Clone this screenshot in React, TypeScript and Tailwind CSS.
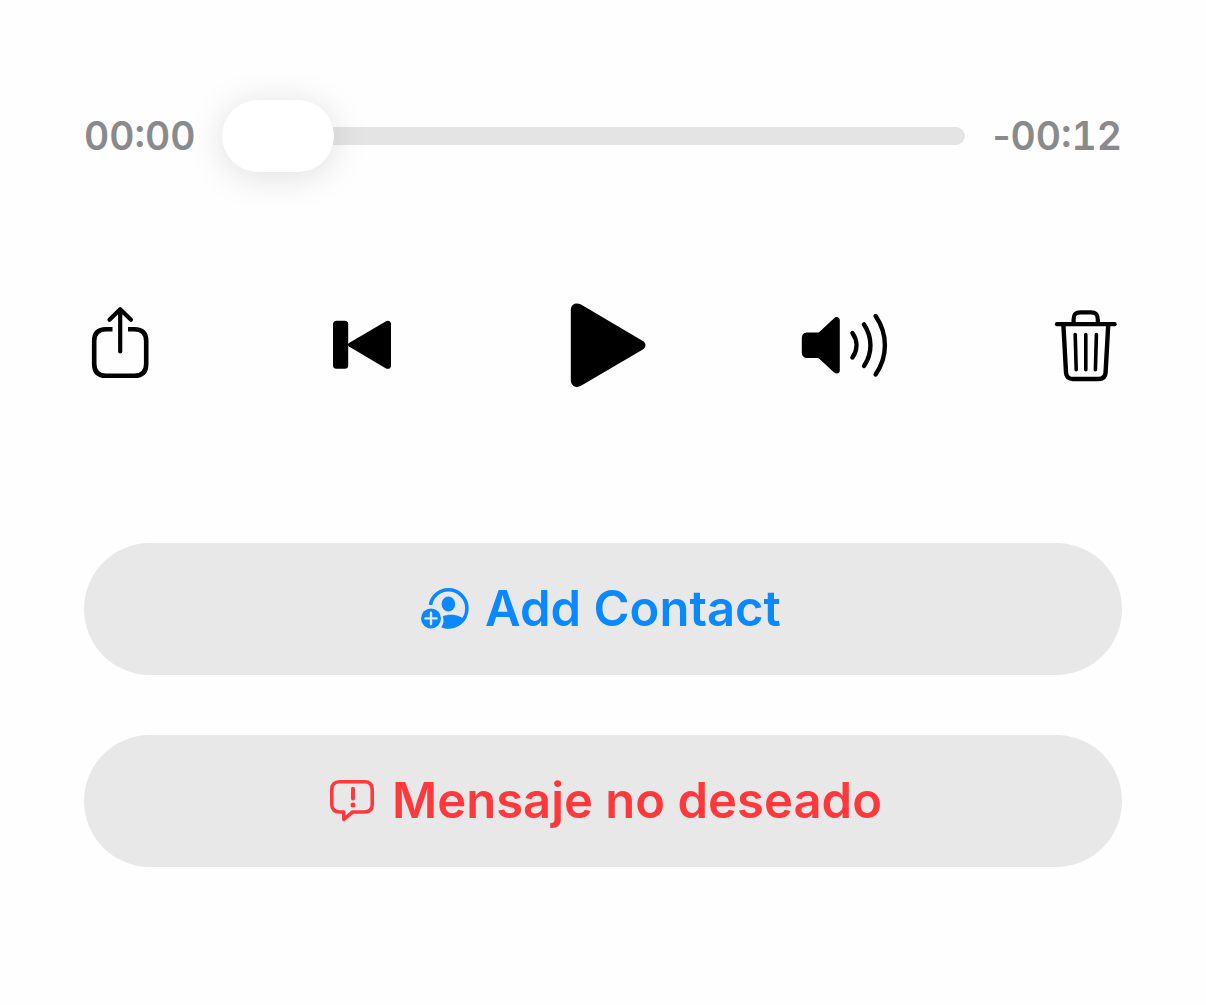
import React, { useState } from 'react';

const iconButton = 'flex size-[88px] items-center justify-center rounded-2xl text-black';
const pillButton =
  'flex h-[132px] w-full items-center justify-center gap-4 rounded-full bg-[#e8e8e8] text-[49px] leading-[60px] font-semibold';

function ShareIcon() {
  return (
    <svg viewBox="0 0 88 88" className="size-full" fill="none" stroke="currentColor" strokeWidth="4.6" aria-hidden="true">
      <path d="M36.5 28.2H30C22 28.2 18.2 32 18.2 40V63C18.2 71 22 74.8 30 74.8H58.4C66.4 74.8 70.2 71 70.2 63V40C70.2 32 66.4 28.2 58.4 28.2H52" />
      <path d="M44.2 50.5V8.5M33.5 18.8L44.2 8.2L54.9 18.8" strokeWidth="4.2" strokeLinecap="round" strokeLinejoin="round" />
    </svg>
  );
}

function BackIcon() {
  return (
    <svg viewBox="0 0 88 88" className="size-full" fill="currentColor" aria-hidden="true">
      <rect x="15" y="19.8" width="15.2" height="48" rx="3.5" />
      <path d="M31 42L67.6 20.4C70.4 18.9 73 20 73 23.2V64.4C73 67.6 70.4 68.7 67.6 67.2L31 45.6C29.6 44.7 29.6 42.9 31 42Z" />
    </svg>
  );
}

function PlayIcon() {
  return (
    <svg viewBox="0 0 88 88" className="size-full" fill="currentColor" aria-hidden="true">
      <path d="M11.8 9C11.8 3 17 .8 22 3.6L83 39.4C87.7 42.2 87.7 46.2 83 49L22 84.8C17 87.6 11.8 85 11.8 79Z" />
    </svg>
  );
}

function SpeakerIcon() {
  return (
    <svg viewBox="0 0 88 88" className="size-full" aria-hidden="true">
      <path
        d="M6.7 31.6H16.2C17.2 31.6 17.9 31.3 18.6 30.7L32.8 17.4C35.6 14.8 38.8 16 38.8 19.4V69.2C38.8 72.6 35.6 73.6 32.8 71.2L18.6 58C17.9 57.4 17.2 57.1 16.2 57.1H6.7C2.8 57.1 .8 55 .8 51.2V37.5C.8 33.7 2.8 31.6 6.7 31.6Z"
        fill="currentColor"
      />
      <path
        d="M51.4 32C56.8 39.6 56.8 48.8 51.4 56.4M63 23.4C71.6 36 71.6 52.4 63 65M74.6 15C87 33 87 55.4 74.6 73.4"
        fill="none"
        stroke="currentColor"
        strokeWidth="4.4"
        strokeLinecap="round"
      />
    </svg>
  );
}

function TrashIcon() {
  return (
    <svg viewBox="0 0 88 88" className="size-full" fill="none" stroke="currentColor" strokeWidth="4.2" strokeLinecap="round" aria-hidden="true">
      <path d="M15 23.2H72.6" />
      <path d="M31.6 22.5V18.5C31.6 13.4 33.6 11.4 38.6 11.4H48.8C53.8 11.4 55.8 13.4 55.8 18.5V22.5" />
      <path d="M21.4 24L24 71.5C24.3 76 26.7 78 31 78H56.6C60.9 78 63.3 76 63.6 71.5L66.2 24" strokeWidth="4.4" />
      <path d="M33.2 33.5L34.2 68.7M43.8 33.5V68.7M54.4 33.5L53.4 68.7" strokeWidth="3.6" />
    </svg>
  );
}

function AddContactIcon() {
  return (
    <svg viewBox="0 0 48 42" className="h-[42px] w-12 shrink-0" aria-hidden="true">
      <path d="M9.4 17C10.8 8.2 18.4 1.8 27.4 1.8C37.6 1.8 45.9 10 45.9 20.2C45.9 26.6 43 32.2 38 35.6" fill="none" stroke="currentColor" strokeWidth="3.6" />
      <ellipse cx="27.4" cy="16" rx="6.8" ry="7.5" fill="currentColor" />
      <path d="M20.2 39.2C22.6 36.2 23.2 32 21.8 28.4C26.6 26.2 34.4 26.4 38.6 28.6C40.8 29.6 42.4 30.6 43.8 32C39.6 38 33.8 40.7 28 40.7C25 40.7 22.4 40.4 20.2 39.2Z" fill="currentColor" />
      <circle cx="10" cy="30.4" r="10" fill="currentColor" />
      <path d="M10 24.8V36M4.4 30.4H15.6" stroke="#e8e8e8" strokeWidth="2.4" strokeLinecap="round" />
    </svg>
  );
}

function JunkIcon() {
  return (
    <svg viewBox="0 0 48 42" className="h-[42px] w-12 shrink-0" fill="none" stroke="currentColor" strokeLinecap="round" strokeLinejoin="round" aria-hidden="true">
      <path d="M11.5 1.8H36.5C41.4 1.8 44.2 4.6 44.2 9.5V24.5C44.2 29.4 41.4 32 36.5 32H24.6L15.8 39.4V32H11.5C6.6 32 3.8 29.4 3.8 24.5V9.5C3.8 4.6 6.6 1.8 11.5 1.8Z" strokeWidth="3.6" />
      <path d="M25 8.8V18.4" strokeWidth="4" />
      <circle cx="25" cy="25" r="2.5" fill="currentColor" stroke="none" />
    </svg>
  );
}

const controls = [
  { label: 'Share', Icon: ShareIcon },
  { label: 'Back to start', Icon: BackIcon },
  { label: 'Play', Icon: PlayIcon },
  { label: 'Speaker', Icon: SpeakerIcon },
  { label: 'Delete', Icon: TrashIcon },
];

export default function App() {
  const [position, setPosition] = useState(0);

  return (
    <main className="min-h-screen bg-[#fefefe] px-[84px] pt-[100px] pb-16 font-[Inter,sans-serif]">
      {/* Scrubber */}
      <div className="flex items-center text-[39px] leading-[48px] font-semibold text-[#8a8a8c] tabular-nums">
        <span>00:00</span>
        <input
          type="range"
          min={0}
          max={12}
          value={position}
          onChange={(e) => setPosition(Number(e.target.value))}
          aria-label="Playback position"
          className="mx-[27px] h-[72px] min-w-0 flex-1 appearance-none bg-transparent [&::-webkit-slider-runnable-track]:h-[18px] [&::-webkit-slider-runnable-track]:rounded-full [&::-webkit-slider-runnable-track]:bg-[#e4e4e4] [&::-webkit-slider-thumb]:-mt-[27px] [&::-webkit-slider-thumb]:h-[72px] [&::-webkit-slider-thumb]:w-28 [&::-webkit-slider-thumb]:appearance-none [&::-webkit-slider-thumb]:rounded-full [&::-webkit-slider-thumb]:bg-white [&::-webkit-slider-thumb]:shadow-[0_4px_36px_rgba(0,0,0,0.13)]"
        />
        <span>
          <span className="proportional-nums">-</span>00:12
        </span>
      </div>

      {/* Playback controls */}
      <div className="-mx-2 mt-[129px] flex items-center justify-between">
        {controls.map(({ label, Icon }) => (
          <button key={label} type="button" aria-label={label} className={iconButton}>
            <Icon />
          </button>
        ))}
      </div>

      {/* Caller actions */}
      <div className="mt-[154px] flex flex-col gap-[60px]">
        <button type="button" className={`${pillButton} pr-1 text-[#0a88ff]`}>
          <AddContactIcon />
          Add Contact
        </button>
        <button type="button" className={`${pillButton} pl-1 text-[#ff383c]`}>
          <JunkIcon />
          Mensaje no deseado
        </button>
      </div>
    </main>
  );
}
